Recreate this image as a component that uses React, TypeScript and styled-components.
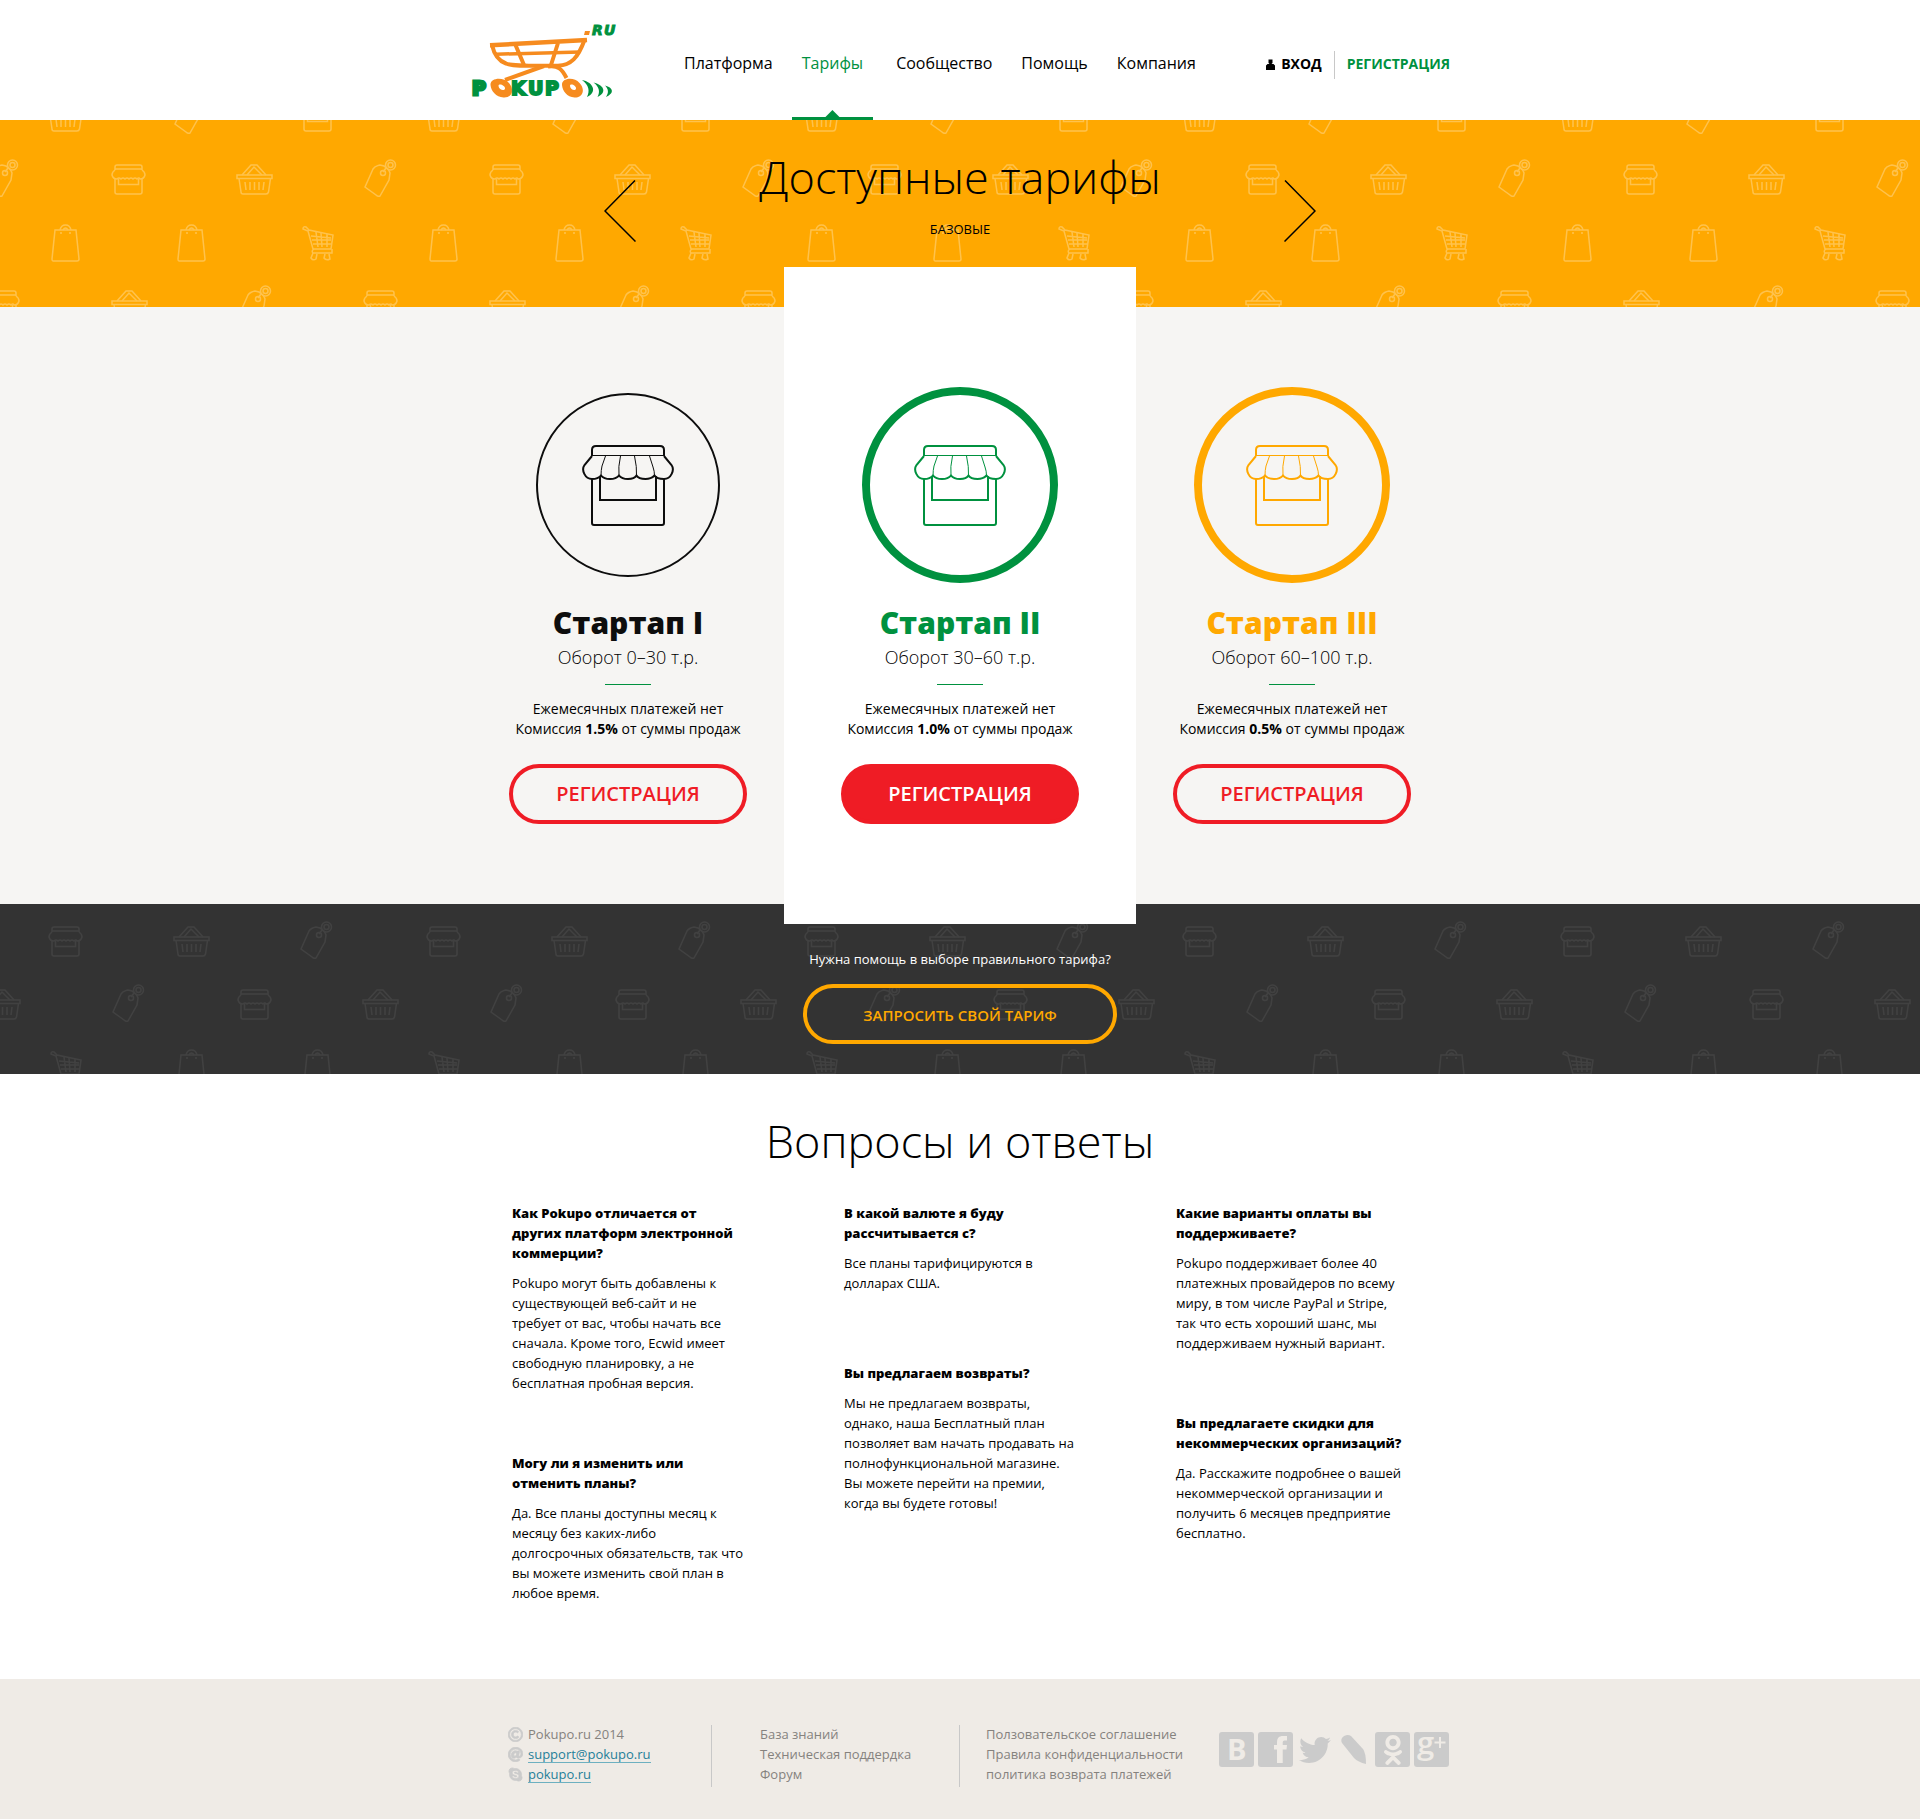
import React from "react";
import styled, { createGlobalStyle, css } from "styled-components";
import { FaAt, FaOdnoklassniki, FaRegCopyright, FaSkype, FaTwitter } from "react-icons/fa";

const color = {
  green: "#00913f",
  orange: "#ffa800",
  logoOrange: "#f68b1f",
  red: "#ef1c25",
  dark: "#333333",
  panel: "#f6f5f3",
  footer: "#efebe6",
  muted: "#85827e",
  icon: "#cbcbcb",
  link: "#1f7f99",
};

const GlobalStyle = createGlobalStyle`
  *, *::before, *::after { box-sizing: border-box; }
  body {
    margin: 0;
    background: #fff;
    color: #000;
    font-family: "Open Sans", "Noto Sans", sans-serif;
    font-size: 13px;
    line-height: 20px;
  }
  h1, h2, h3, p, ul { margin: 0; padding: 0; }
  ul { list-style: none; }
  a { color: inherit; text-decoration: none; }
  button { font-family: inherit; cursor: pointer; }
`;

/* ---------- header ---------- */

const Header = styled.header`
  display: flex;
  align-items: stretch;
  width: 100%;
  max-width: 980px;
  height: 120px;
  margin: 0 auto;
`;

const LogoLink = styled.a`
  display: block;
  flex: none;
  width: 150px;
  padding-top: 20px;

  svg { display: block; overflow: visible; }
`;

const Nav = styled.nav`
  display: flex;
  gap: 9px;
  margin-left: 54px;
`;

const NavLink = styled.a<{ $active?: boolean }>`
  position: relative;
  padding: 53px 10px 0;
  font-size: 16px;
  line-height: 20px;
  color: ${(p) => (p.$active ? color.green : "#000")};

  ${(p) =>
    p.$active &&
    css`
      margin-right: 4px;
      &::before,
      &::after {
        content: "";
        position: absolute;
        left: 0;
        right: 0;
        bottom: 0;
        height: 3px;
        background: ${color.green};
      }
      &::before {
        left: calc(50% - 8px);
        right: auto;
        width: 16px;
        height: 10px;
        clip-path: polygon(50% 0, 100% 80%, 100% 100%, 0 100%, 0 80%);
      }
    `}
`;

const Account = styled.div`
  display: flex;
  align-items: center;
  height: 28px;
  margin: 51px 0 0 auto;
  font-size: 14px;
  font-weight: 700;
`;

const AccountLink = styled.a<{ $accent?: boolean }>`
  display: flex;
  align-items: center;
  gap: 6px;
  height: 28px;
  padding-bottom: 2px;
  color: ${(p) => (p.$accent ? color.green : "#000")};

  ${(p) =>
    p.$accent &&
    css`
      margin-left: 12px;
      padding-left: 12px;
      border-left: 1px solid #c8c8c8;
    `}
`;

/* ---------- patterned bands ---------- */

const Band = styled.section<{ $bg: string }>`
  position: relative;
  overflow: hidden;
  background: ${(p) => p.$bg};
`;

const PatternSvg = styled.svg`
  position: absolute;
  inset: 0;
  width: 100%;
  height: 100%;
`;

const HeroInner = styled.div`
  position: relative;
  display: flex;
  justify-content: space-between;
  align-items: flex-start;
  width: 100%;
  max-width: 712px;
  margin: 0 auto;
  padding: 27px 0 65px;
`;

const ArrowButton = styled.button`
  flex: none;
  width: 32px;
  height: 62px;
  margin-top: 33px;
  padding: 0;
  border: 0;
  background: none;

  svg { display: block; }
`;

const HeroText = styled.div`
  text-align: center;
`;

const Title = styled.h1`
  font-size: 45px;
  line-height: 60px;
  font-weight: 300;
  text-align: center;
`;

const Kicker = styled.p`
  margin-top: 12px;
  text-transform: uppercase;
`;

const HelpInner = styled.div`
  position: relative;
  display: flex;
  flex-direction: column;
  align-items: center;
  gap: 15px;
  padding: 45px 0 30px;
  color: #fff;
`;

/* ---------- plans ---------- */

const Plans = styled.section`
  display: grid;
  grid-template-columns: repeat(3, 332px);
  justify-content: center;
  background: ${color.panel};
`;

const Plan = styled.article<{ $featured?: boolean }>`
  display: flex;
  flex-direction: column;
  align-items: center;
  padding: 80px 0;
  text-align: center;

  ${(p) =>
    p.$featured &&
    css`
      position: relative;
      z-index: 1;
      margin: -40px -10px -20px;
      padding: 120px 0 100px;
      background: #fff;
    `}
`;

const Badge = styled.div<{ $color: string; $thin?: boolean }>`
  display: flex;
  align-items: center;
  justify-content: center;
  width: ${(p) => (p.$thin ? 184 : 196)}px;
  height: ${(p) => (p.$thin ? 184 : 196)}px;
  margin: ${(p) => (p.$thin ? 6 : 0)}px 0;
  border: ${(p) => (p.$thin ? 2 : 8)}px solid ${(p) => p.$color};
  border-radius: 50%;
  color: ${(p) => p.$color};
`;

const PlanName = styled.h2<{ $color: string }>`
  margin-top: 20px;
  font-size: 30px;
  line-height: 40px;
  font-weight: 800;
  color: ${(p) => p.$color};
`;

const Turnover = styled.p`
  font-size: 18px;
  line-height: 28px;
  font-weight: 300;
`;

const Rule = styled.hr`
  width: 46px;
  height: 1px;
  margin: 13px 0 14px;
  border: 0;
  background: ${color.green};
`;

const Terms = styled.p`
  margin-bottom: 25px;
  font-size: 14px;
  line-height: 20px;
`;

const PillButton = styled.button<{ $color: string; $filled?: boolean; $wide?: boolean }>`
  width: ${(p) => (p.$wide ? 314 : 238)}px;
  height: 60px;
  padding: ${(p) => (p.$wide ? 2 : 0)}px 0 0;
  border: 4px solid ${(p) => p.$color};
  border-radius: 30px;
  background: ${(p) => (p.$filled ? p.$color : "transparent")};
  color: ${(p) => (p.$filled ? "#fff" : p.$color)};
  font-size: ${(p) => (p.$wide ? 15 : 20)}px;
  line-height: 20px;
  font-weight: 600;
  text-transform: uppercase;
`;

/* ---------- questions ---------- */

const Faq = styled.section`
  padding: 37px 0 76px;
`;

const FaqColumns = styled.div`
  display: grid;
  grid-template-columns: repeat(3, 234px);
  column-gap: 98px;
  justify-content: center;
  width: 100%;
  max-width: 980px;
  margin: 32px auto 0;
  padding-left: 2px;
`;

const FaqColumn = styled.div<{ $gap: number }>`
  display: flex;
  flex-direction: column;
  gap: ${(p) => p.$gap}px;
`;

const Question = styled.h3`
  margin-bottom: 10px;
  font-size: 13px;
  line-height: 20px;
  font-weight: 800;
`;

/* ---------- footer ---------- */

const FooterBar = styled.footer`
  background: ${color.footer};
  color: ${color.muted};
`;

const FooterInner = styled.div`
  display: flex;
  align-items: flex-start;
  width: 100%;
  max-width: 980px;
  margin: 0 auto;
  padding: 46px 1px 32px 38px;
`;

const FooterList = styled.ul<{ $width: number; $indent?: number; $rule?: boolean }>`
  flex: none;
  width: ${(p) => p.$width}px;
  height: 62px;
  padding-left: ${(p) => p.$indent ?? 0}px;
  border-right: ${(p) => (p.$rule ? "1px solid #c8c8c8" : "0")};
  white-space: nowrap;
`;

const FooterItem = styled.li`
  display: flex;
  align-items: center;
  gap: 5px;
  height: 20px;
  padding-bottom: 2px;

  svg { flex: none; color: ${color.icon}; stroke-width: 24px; }
`;

const Underlined = styled.a`
  height: 18px;
  line-height: 18px;
  border-bottom: 1px solid #6db0c0;
  color: ${color.link};
`;

const Social = styled.div`
  display: flex;
  gap: 4px;
  margin: 7px 0 0 auto;
`;

const SocialLink = styled.a<{ $plain?: boolean }>`
  display: flex;
  align-items: center;
  justify-content: center;
  width: 35px;
  height: 35px;
  border-radius: 3px;
  background: ${(p) => (p.$plain ? "transparent" : color.icon)};
  color: ${(p) => (p.$plain ? color.icon : color.footer)};

  svg { flex: none; overflow: visible; }
`;

/* ---------- drawings ---------- */

const Logo = () => (
  <svg width="150" height="80" viewBox="0 0 150 80" role="img" aria-label="Pokupo.ru">
    <g fill="none" stroke={color.logoOrange} strokeWidth="4">
      <path d="M20 25.3 L117 20" strokeWidth="4.5" />
      <path d="M22 25 C24 34 29 41 36 43.5 C43 46.500 60 45.800 88 45.800 C101 45 108 38 114.500 20" />
      <path d="M26 34.200 L110 32" strokeWidth="3.500" />
      <path d="M45.500 25 L54 45 M88 23 L81 45" />
      <path d="M74 46 L35 60" />
      <path d="M78 46.500 C88 45 92 49 96.500 58" />
    </g>
    <g fill={color.logoOrange} fillRule="evenodd">
      <path d="M20.500 65 C20 58 33 56.500 39 63 C45 70 42 78 33.500 77.500 C26 77 21 71 20.500 65 Z M28.500 66 C29 70 34.500 71.500 35 68.500 C35.500 65.500 28.500 62.500 28.500 66 Z" />
      <path d="M92 65 C91.500 58 104 56.500 109.500 63 C116 70 112.500 78 104.500 77.500 C97 77 92.500 71 92 65 Z M100 66 C100.500 70 105.500 71.500 106 68.500 C106.500 65.500 100 62.500 100 66 Z" />
      <path d="M115 11 h5 l-1 4 h-5 Z" />
    </g>
    <g fill={color.green}>
      <path d="M112 60 C123 62 128 72 117 77 C120 71 119 65 112 60 Z" />
      <path d="M123.500 62.500 C133 64.500 138 72 127.500 77 C130.500 71.500 129 66.500 123.500 62.500 Z" />
      <path d="M135 65.500 C143 67.500 145 73 136 77 C139 72.500 138.500 69 135 65.500 Z" />
      <g fontFamily="'DejaVu Sans', sans-serif" fontWeight="700" stroke={color.green}>
        <text x="2" y="75" fontSize="19" strokeWidth="3">P</text>
        <text x="41 58 75" y="75" fontSize="19" strokeWidth="2">KUP</text>
        <text x="122 134" y="14.500" fontSize="14" fontStyle="italic" strokeWidth="1">RU</text>
      </g>
    </g>
  </svg>
);

const UserIcon = () => (
  <svg width="9" height="11" viewBox="0 0 9 11" aria-hidden="true">
    <path d="M2.500 0.500 h4 v3.500 l-1 1 h2 l1.500 1.500 v4.500 h-9 v-4.500 l1.500 -1.500 h2 l-1 -1 Z" />
  </svg>
);

const Arrow = ({ right }: { right?: boolean }) => (
  <svg width="32" height="62" viewBox="0 0 32 62" fill="none" stroke="#000" strokeWidth="1.500" aria-hidden="true">
    <path d={right ? "M1 0.500 L31 31 L0.500 61.500" : "M31 0.500 L1 31 L31.500 61.500"} />
  </svg>
);

const StoreIcon = () => (
  <svg width="92" height="81" viewBox="0 0 92 81" fill="none" stroke="currentColor" strokeWidth="2" aria-hidden="true">
    <path d="M10 11 V5 Q10 1 14 1 H78 Q82 1 82 5 V11" />
    <path d="M10 10.500 H82" strokeWidth="1" />
    <path d="M10 11 L2.500 20 C-1 25 3 34 10 34 C14 34 17 33 19 30.500 C21 33 24 34 28 34 C32 34 35 33 37 30.500 C39 33 42 34 46 34 C50 34 53 33 54.500 30.500 C56 33 60 34 63.500 34 C67 34 70 33 72.500 30.500 C74 33 78 34 82 34 C89 34 93 25 89.500 20 L82 11" />
    <path d="M23.500 11 L20 21 Q19 25 19 31 M38.500 11 Q36 22 37 31 M52.500 11 Q55 22 54.500 31 M67.500 11 L71 22 Q72.500 26 72.500 31" strokeWidth="1" />
    <path d="M10 34 V78 Q10 80 12 80 H80 Q82 80 82 78 V34" />
    <path d="M18 31 V55 H74 V31" />
  </svg>
);

const motifs = {
  store: (
    <>
      <path d="M4 6 V3 Q4 1 6 1 H29 Q31 1 31 3 V6 M4 5 H31" />
      <path d="M4 6 Q1 8 1 11 Q2 15 6 15 Q8 13 10 15 Q12 13 14 15 Q16 13 18 15 Q20 13 22 15 Q24 13 26 15 Q28 13 29 15 Q33 15 34 11 Q34 8 31 6" />
      <path d="M4 15 V28 Q4 30 6 30 H29 Q31 30 31 28 V15 M7.500 15 V20.500 H27.500 V15" />
    </>
  ),
  basket: (
    <>
      <path d="M1 11 H36 V14.500 H1 Z M3 14.500 L5 28 Q5 30 7 30 H30 Q32 30 32.500 28 L34.500 14.500" />
      <path d="M6 11 L15 1 H21 L30 11 M11 11 L18 3 L26 11" />
      <path d="M9 18 L10 26 M14 18 V26 M18.500 18 V26 M23 18 V26 M28 18 L27 26" />
    </>
  ),
  tag: (
    <>
      <path d="M1 27 L9 9 Q11 6 16 5 L20 6 Q25 9 26 13 L25 20 L16 36 Q14 37 12 35 Z" />
      <circle cx="19" cy="13" r="2.500" />
      <circle cx="26.500" cy="5" r="5" />
      <circle cx="26.500" cy="5" r="2.500" />
      <path d="M22 8 L19 12" />
    </>
  ),
  bag: (
    <>
      <path d="M4 6 H25 L28 35 Q28 37 26 37 H2 Q1 37 1 35 Z" />
      <path d="M9 6 Q10 1 14.500 1 Q19 1 20 6 M12 6 Q14.500 2 17 6 M10 8 V10 M19 8 V10" />
    </>
  ),
  cart: (
    <>
      <path d="M1 3 Q1 0 4 1 L7 4 L31 9 L29 23 H11 L6 5 Z" />
      <path d="M9 10 L29 12 M10 14 H29 M11 18 H29 M14 6 L16 21 M19 7 L20 21 M25 8 V21" />
      <path d="M12 23 Q9 25 11 27 H30 V23" />
      <path d="M11 27 L9 32 Q11 35 14 33 L15 28 M23 28 L22 32 Q24 35 28 33 L27 28" />
    </>
  ),
};

type Motif = keyof typeof motifs;

/* x, y of the upper left corner inside one 378x252 tile */
const tile: [Motif, number, number][] = [
  ["basket", 47, 11],
  ["tag", 174, 7],
  ["store", 300, 11],
  ["tag", -14, 70],
  ["tag", 364, 70],
  ["store", 111, 74],
  ["basket", 236, 74],
  ["bag", 51, 134],
  ["bag", 177, 134],
  ["cart", 302, 136],
  ["store", -15, 200],
  ["store", 363, 200],
  ["basket", 111, 200],
  ["tag", 239, 196],
];

const Pattern = ({ id, x, y, opacity }: { id: string; x: number; y: number; opacity: number }) => (
  <PatternSvg aria-hidden="true">
    <defs>
      <pattern id={id} width="378" height="252" patternUnits="userSpaceOnUse" patternTransform={`translate(${x} ${y})`}>
        {tile.map(([name, left, top], i) => (
          <g key={i} transform={`translate(${left} ${top})`} fill="none" stroke="#fff" strokeWidth="1.500">
            {motifs[name]}
          </g>
        ))}
      </pattern>
    </defs>
    <rect width="100%" height="100%" fill={`url(#${id})`} opacity={opacity} />
  </PatternSvg>
);

const SocialSvg = ({ children }: { children: React.ReactNode }) => (
  <svg width="35" height="35" viewBox="0 0 35 35" fill="currentColor" fontFamily="'Open Sans', sans-serif" aria-hidden="true">
    {children}
  </svg>
);

/* ---------- content ---------- */

const navItems = ["Платформа", "Тарифы", "Сообщество", "Помощь", "Компания"];

const plans = [
  { name: "Стартап I", turnover: "Оборот 0–30 т.р.", fee: "1.5%", tint: "#0d0d0d", thin: true },
  { name: "Стартап II", turnover: "Оборот 30–60 т.р.", fee: "1.0%", tint: color.green, featured: true },
  { name: "Стартап III", turnover: "Оборот 60–100 т.р.", fee: "0.5%", tint: color.orange },
];

const faq = [
  {
    gap: 60,
    items: [
      {
        q: "Как Pokupo отличается от других платформ электронной коммерции?",
        a: "Pokupo могут быть добавлены к существующей веб-сайт и не требует от вас, чтобы начать все сначала. Кроме того, Ecwid имеет свободную планировку, а не бесплатная пробная версия.",
      },
      {
        q: "Могу ли я изменить или отменить планы?",
        a: "Да. Все планы доступны месяц к месяцу без каких-либо долгосрочных обязательств, так что вы можете изменить свой план в любое время.",
      },
    ],
  },
  {
    gap: 70,
    items: [
      { q: "В какой валюте я буду рассчитывается с?", a: "Все планы тарифицируются в долларах США." },
      {
        q: "Вы предлагаем возвраты?",
        a: "Мы не предлагаем возвраты, однако, наша Бесплатный план позволяет вам начать продавать на полнофункциональной магазине. Вы можете перейти на премии, когда вы будете готовы!",
      },
    ],
  },
  {
    gap: 60,
    items: [
      {
        q: "Какие варианты оплаты вы поддерживаете?",
        a: "Pokupo поддерживает более 40 платежных провайдеров по всему миру, в том числе PayPal и Stripe, так что есть хороший шанс, мы поддерживаем нужный вариант.",
      },
      {
        q: "Вы предлагаете скидки для некоммерческих организаций?",
        a: "Да. Расскажите подробнее о вашей некоммерческой организации и получить 6 месяцев предприятие бесплатно.",
      },
    ],
  },
];

export default function App() {
  return (
    <>
      <GlobalStyle />
      <Header>
        <LogoLink href="#">
          <Logo />
        </LogoLink>
        <Nav>
          {navItems.map((item) => (
            <NavLink key={item} href="#" $active={item === "Тарифы"}>
              {item}
            </NavLink>
          ))}
        </Nav>
        <Account>
          <AccountLink href="#">
            <UserIcon />
            ВХОД
          </AccountLink>
          <AccountLink href="#" $accent>
            РЕГИСТРАЦИЯ
          </AccountLink>
        </Account>
      </Header>

      <main>
        <Band $bg={color.orange}>
          <Pattern id="pattern-light" x={0} y={-30} opacity={0.3} />
          <HeroInner>
            <ArrowButton type="button" aria-label="Предыдущие тарифы">
              <Arrow />
            </ArrowButton>
            <HeroText>
              <Title>Доступные тарифы</Title>
              <Kicker>Базовые</Kicker>
            </HeroText>
            <ArrowButton type="button" aria-label="Следующие тарифы">
              <Arrow right />
            </ArrowButton>
          </HeroInner>
        </Band>

        <Plans>
          {plans.map((plan) => (
            <Plan key={plan.name} $featured={plan.featured}>
              <Badge $color={plan.tint} $thin={plan.thin}>
                <StoreIcon />
              </Badge>
              <PlanName $color={plan.tint}>{plan.name}</PlanName>
              <Turnover>{plan.turnover}</Turnover>
              <Rule />
              <Terms>
                Ежемесячных платежей нет
                <br />
                Комиссия <b>{plan.fee}</b> от суммы продаж
              </Terms>
              <PillButton type="button" $color={color.red} $filled={plan.featured}>
                Регистрация
              </PillButton>
            </Plan>
          ))}
        </Plans>

        <Band $bg={color.dark}>
          <Pattern id="pattern-dark" x={126} y={11} opacity={0.07} />
          <HelpInner>
            <p>Нужна помощь в выборе правильного тарифа?</p>
            <PillButton type="button" $color={color.orange} $wide>
              Запросить свой тариф
            </PillButton>
          </HelpInner>
        </Band>

        <Faq>
          <Title as="h2">Вопросы и ответы</Title>
          <FaqColumns>
            {faq.map((column, i) => (
              <FaqColumn key={i} $gap={column.gap}>
                {column.items.map((item) => (
                  <article key={item.q}>
                    <Question>{item.q}</Question>
                    <p>{item.a}</p>
                  </article>
                ))}
              </FaqColumn>
            ))}
          </FaqColumns>
        </Faq>
      </main>

      <FooterBar>
        <FooterInner>
          <FooterList $width={204} $rule>
            <FooterItem>
              <FaRegCopyright size={15} />
              Pokupo.ru 2014
            </FooterItem>
            <FooterItem>
              <FaAt size={15} />
              <Underlined href="#">support@pokupo.ru</Underlined>
            </FooterItem>
            <FooterItem>
              <FaSkype size={15} />
              <Underlined href="#">pokupo.ru</Underlined>
            </FooterItem>
          </FooterList>
          <FooterList $width={248} $indent={48} $rule>
            <FooterItem><a href="#">База знаний</a></FooterItem>
            <FooterItem><a href="#">Техническая поддердка</a></FooterItem>
            <FooterItem><a href="#">Форум</a></FooterItem>
          </FooterList>
          <FooterList $width={230} $indent={26}>
            <FooterItem><a href="#">Ползовательское соглашение</a></FooterItem>
            <FooterItem><a href="#">Правила конфиденциальности</a></FooterItem>
            <FooterItem><a href="#">политика возврата платежей</a></FooterItem>
          </FooterList>
          <Social>
            <SocialLink href="#" aria-label="ВКонтакте">
              <SocialSvg>
                <text x="8" y="28" fontSize="29" fontWeight="700">B</text>
              </SocialSvg>
            </SocialLink>
            <SocialLink href="#" aria-label="Facebook">
              <SocialSvg>
                <path d="M19 31 V17.500 H16 V13 H19 V10.500 C19 6 21 4 25 4 H29 V8.500 H26.500 Q24.700 8.500 24.700 10.500 V13 H29 L28.500 17.500 H24.700 V31 Z" />
              </SocialSvg>
            </SocialLink>
            <SocialLink href="#" aria-label="Twitter" $plain>
              <FaTwitter size={32} />
            </SocialLink>
            <SocialLink href="#" aria-label="LiveJournal" $plain>
              <SocialSvg>
                <path d="M6 11 C3 6 10 1 15 4 L27 17 Q30 21 30 32 Q22 30 18 26 Z" />
              </SocialSvg>
            </SocialLink>
            <SocialLink href="#" aria-label="Одноклассники">
              <FaOdnoklassniki size={30} />
            </SocialLink>
            <SocialLink href="#" aria-label="Google+">
              <SocialSvg>
                <text x="3" y="22" fontSize="31" fontWeight="600">g</text>
                <path d="M25 5 h2 v4.500 h4.500 v2 h-4.500 v4.500 h-2 v-4.500 h-4.500 v-2 h4.500 Z" />
              </SocialSvg>
            </SocialLink>
          </Social>
        </FooterInner>
      </FooterBar>
    </>
  );
}
